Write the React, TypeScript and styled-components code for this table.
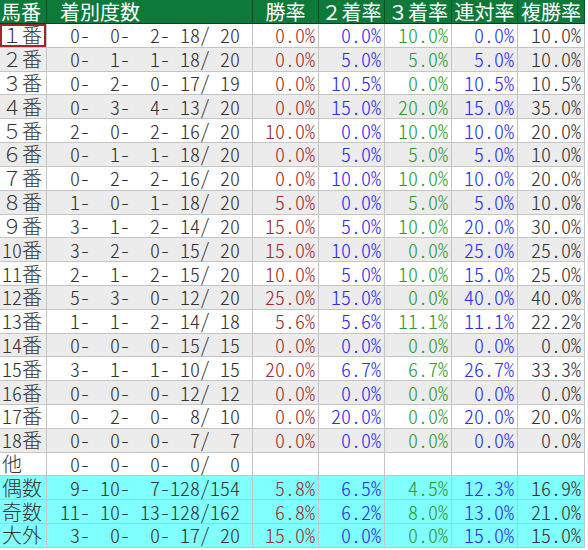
import React from "react";
import styled, { createGlobalStyle, css } from "styled-components";

const GlobalStyle = createGlobalStyle`
  html, body { margin: 0; padding: 0; background: #ffffff; }
  body { font-family: "Noto Sans CJK JP", "Noto Sans", sans-serif; }
`;

type Tone = "win" | "second" | "third" | "rentai" | "place" | "plain";
type RowKind = "odd" | "even" | "summary";

const toneColor: Record<Tone, string> = {
  win: "#9c3030",
  second: "#2b2bff",
  third: "#2f9a2f",
  rentai: "#2b2bff",
  place: "#333333",
  plain: "#333333",
};

const rowBg: Record<RowKind, string> = {
  odd: "#ffffff",
  even: "#ececec",
  summary: "#80ffff",
};

const Table = styled.div`
  display: grid;
  grid-template-columns: 47px 206px 66px 66px 67px 66px 67px;
  grid-template-rows: 24px;
  grid-auto-rows: 23.82px;
  width: 585px;
  font-family: "Noto Sans CJK JP", "Noto Sans CJK SC", sans-serif;
  font-size: 20px;
  font-weight: 300;
`;

const HeadCell = styled.div<{ $align: "left" | "center"; $pad?: number }>`
  box-sizing: border-box;
  display: flex;
  align-items: center;
  justify-content: ${(p) => (p.$align === "center" ? "center" : "flex-start")};
  padding-left: ${(p) => p.$pad ?? 0}px;
  background: #0e7a3a;
  color: #ffffff;
  font-weight: 400;
  border-right: 1px solid #0a4d26;
  border-bottom: 1px solid #1c2f22;
  white-space: pre;
  line-height: 22px;
`;

const Cell = styled.div<{
  $kind: RowKind;
  $align: "left" | "right";
  $tone?: Tone;
  $padRight?: number;
  $selected?: boolean;
  $half?: boolean;
}>`
  box-sizing: border-box;
  display: flex;
  align-items: center;
  justify-content: ${(p) => (p.$align === "right" ? "flex-end" : "flex-start")};
  padding-left: ${(p) => (p.$align === "left" ? 2 : 0)}px;
  padding-right: ${(p) => p.$padRight ?? 3}px;
  background: ${(p) => rowBg[p.$kind]};
  color: ${(p) => toneColor[p.$tone ?? "plain"]};
  border-right: 1px solid #c4c4c4;
  border-bottom: 1px solid #c4c4c4;
  white-space: pre;
  line-height: 22px;
  ${(p) =>
    p.$half &&
    css`
      font-feature-settings: "hwid" 1;
    `}
  ${(p) =>
    p.$selected &&
    css`
      box-shadow: inset 0 0 0 2px #a1262b;
    `}
`;

const HalfNum = styled.span`
  font-feature-settings: "hwid" 1;
`;

type Row = {
  num: string;
  fullWidth: boolean;
  suffix: string;
  counts: [number, number, number, number, number];
  pcts: string[] | null;
  kind: RowKind;
};

const pad3 = (n: number) => String(n).padStart(3, " ");
const fmtCounts = (c: [number, number, number, number, number]) =>
  `${pad3(c[0])}-${pad3(c[1])}-${pad3(c[2])}-${pad3(c[3])}/${pad3(c[4])}`;

const fw = ["１", "２", "３", "４", "５", "６", "７", "８", "９"];

const raw: [number, number, number, number, number, string[]][] = [
  [0, 0, 2, 18, 20, ["0.0", "0.0", "10.0", "0.0", "10.0"]],
  [0, 1, 1, 18, 20, ["0.0", "5.0", "5.0", "5.0", "10.0"]],
  [0, 2, 0, 17, 19, ["0.0", "10.5", "0.0", "10.5", "10.5"]],
  [0, 3, 4, 13, 20, ["0.0", "15.0", "20.0", "15.0", "35.0"]],
  [2, 0, 2, 16, 20, ["10.0", "0.0", "10.0", "10.0", "20.0"]],
  [0, 1, 1, 18, 20, ["0.0", "5.0", "5.0", "5.0", "10.0"]],
  [0, 2, 2, 16, 20, ["0.0", "10.0", "10.0", "10.0", "20.0"]],
  [1, 0, 1, 18, 20, ["5.0", "0.0", "5.0", "5.0", "10.0"]],
  [3, 1, 2, 14, 20, ["15.0", "5.0", "10.0", "20.0", "30.0"]],
  [3, 2, 0, 15, 20, ["15.0", "10.0", "0.0", "25.0", "25.0"]],
  [2, 1, 2, 15, 20, ["10.0", "5.0", "10.0", "15.0", "25.0"]],
  [5, 3, 0, 12, 20, ["25.0", "15.0", "0.0", "40.0", "40.0"]],
  [1, 1, 2, 14, 18, ["5.6", "5.6", "11.1", "11.1", "22.2"]],
  [0, 0, 0, 15, 15, ["0.0", "0.0", "0.0", "0.0", "0.0"]],
  [3, 1, 1, 10, 15, ["20.0", "6.7", "6.7", "26.7", "33.3"]],
  [0, 0, 0, 12, 12, ["0.0", "0.0", "0.0", "0.0", "0.0"]],
  [0, 2, 0, 8, 10, ["0.0", "20.0", "0.0", "20.0", "20.0"]],
  [0, 0, 0, 7, 7, ["0.0", "0.0", "0.0", "0.0", "0.0"]],
];

const rows: Row[] = [
  ...raw.map(([a, b, c, d, e, p], i) => ({
    num: i < 9 ? fw[i] : String(i + 1),
    fullWidth: i < 9,
    suffix: "番",
    counts: [a, b, c, d, e] as [number, number, number, number, number],
    pcts: p,
    kind: (i % 2 === 0 ? "odd" : "even") as RowKind,
  })),
  { num: "", fullWidth: true, suffix: "他", counts: [0, 0, 0, 0, 0], pcts: null, kind: "odd" },
  {
    num: "",
    fullWidth: true,
    suffix: "偶数",
    counts: [9, 10, 7, 128, 154],
    pcts: ["5.8", "6.5", "4.5", "12.3", "16.9"],
    kind: "summary",
  },
  {
    num: "",
    fullWidth: true,
    suffix: "奇数",
    counts: [11, 10, 13, 128, 162],
    pcts: ["6.8", "6.2", "8.0", "13.0", "21.0"],
    kind: "summary",
  },
  {
    num: "",
    fullWidth: true,
    suffix: "大外",
    counts: [3, 0, 0, 17, 20],
    pcts: ["15.0", "0.0", "0.0", "15.0", "15.0"],
    kind: "summary",
  },
];

const tones: Tone[] = ["win", "second", "third", "rentai", "place"];
const headers = ["勝率", "２着率", "３着率", "連対率", "複勝率"];

export default function App() {
  return (
    <>
      <GlobalStyle />
      <Table>
        <HeadCell $align="left" $pad={1}>馬番</HeadCell>
        <HeadCell $align="left" $pad={13}>着別度数</HeadCell>
        {headers.map((h) => (
          <HeadCell key={h} $align="center">
            {h}
          </HeadCell>
        ))}
        {rows.map((r, ri) => (
          <React.Fragment key={r.num + r.suffix}>
            <Cell $kind={r.kind} $align="left" $selected={ri === 0}>
              {r.fullWidth ? r.num : <HalfNum>{r.num}</HalfNum>}
              {r.suffix}
            </Cell>
            <Cell $kind={r.kind} $align="right" $padRight={12} $half>
              {fmtCounts(r.counts)}
            </Cell>
            {tones.map((t, ti) => (
              <Cell key={t} $kind={r.kind} $align="right" $tone={t} $half>
                {r.pcts ? `${r.pcts[ti]}%` : ""}
              </Cell>
            ))}
          </React.Fragment>
        ))}
      </Table>
    </>
  );
}
